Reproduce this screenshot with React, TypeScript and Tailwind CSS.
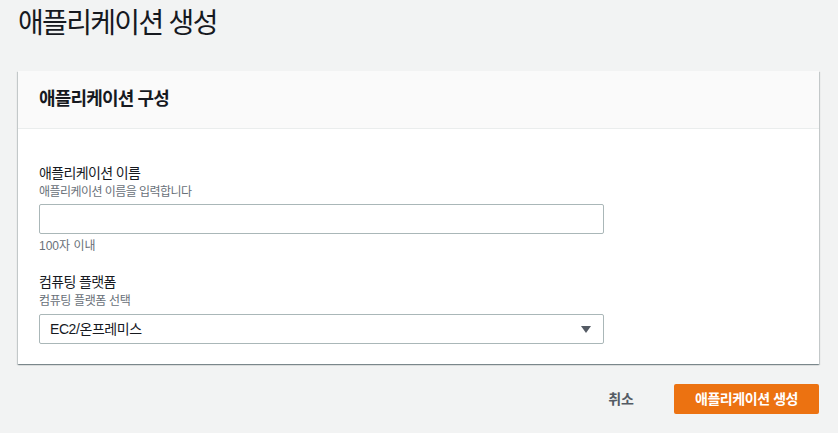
import React from "react";

const font = "[font-family:'Liberation_Sans','Noto_Sans_CJK_KR',sans-serif]";

export default function App() {
  return (
    <div className={`min-h-screen w-full bg-[#f2f3f3] pl-[18px] pr-[19px] text-[#16191f] ${font}`}>
      <h1 className="pt-[6px] text-[28px] leading-[36px] font-normal tracking-[-0.06em] text-[#16191f]">
        애플리케이션 생성
      </h1>

      <div className="mt-[29px] bg-white shadow-[0_1px_1px_0_rgba(0,28,36,0.3),1px_1px_1px_0_rgba(0,28,36,0.15),-1px_1px_1px_0_rgba(0,28,36,0.15)]">
        <div className="flex h-[58px] items-center border-b border-[#eaeded] bg-[#fafafa] px-[21px]">
          <h2 className="text-[18px] font-bold tracking-[-0.046em]">애플리케이션 구성</h2>
        </div>

        <div className="px-[21px] pt-[34px] pb-[20px]">
          <div className="w-[565px]">
            <div className="text-[14px] leading-[20px] tracking-[-0.045em]">애플리케이션 이름</div>
            <div className="mt-[1px] text-[12px] leading-[16px] tracking-[-0.045em] text-[#687078]">
              애플리케이션 이름을 입력합니다
            </div>
            <input
              type="text"
              className="mt-[4px] block h-[30px] w-full rounded-[2px] border border-[#aab7b8] bg-white px-[10px] text-[14px] outline-none"
            />
            <div className="mt-[4px] text-[12px] leading-[16px] text-[#687078]">100자 이내</div>

            <div className="mt-[18px] text-[14px] leading-[20px] tracking-[-0.045em]">컴퓨팅 플랫폼</div>
            <div className="mt-[1px] text-[12px] leading-[16px] tracking-[-0.03em] text-[#687078]">
              컴퓨팅 플랫폼 선택
            </div>
            <div className="mt-[5px] flex h-[30px] w-full items-center justify-between rounded-[2px] border border-[#aab7b8] bg-white pl-[10px] pr-[12px]">
              <span className="text-[14px] tracking-[-0.03em]">EC2/온프레미스</span>
              <svg width="10" height="7" viewBox="0 0 10 7">
                <path d="M0 0 H10 L5 7 Z" fill="#545b64" />
              </svg>
            </div>
          </div>
        </div>
      </div>

      <div className="mt-[20px] flex items-center justify-end gap-[20px]">
        <button className="h-[30px] px-[20px] text-[14px] font-bold text-[#545b64]">취소</button>
        <button className="h-[30px] w-[145px] rounded-[2px] bg-[#ec7211] text-[14px] font-bold tracking-[-0.03em] text-white">
          애플리케이션 생성
        </button>
      </div>
    </div>
  );
}
